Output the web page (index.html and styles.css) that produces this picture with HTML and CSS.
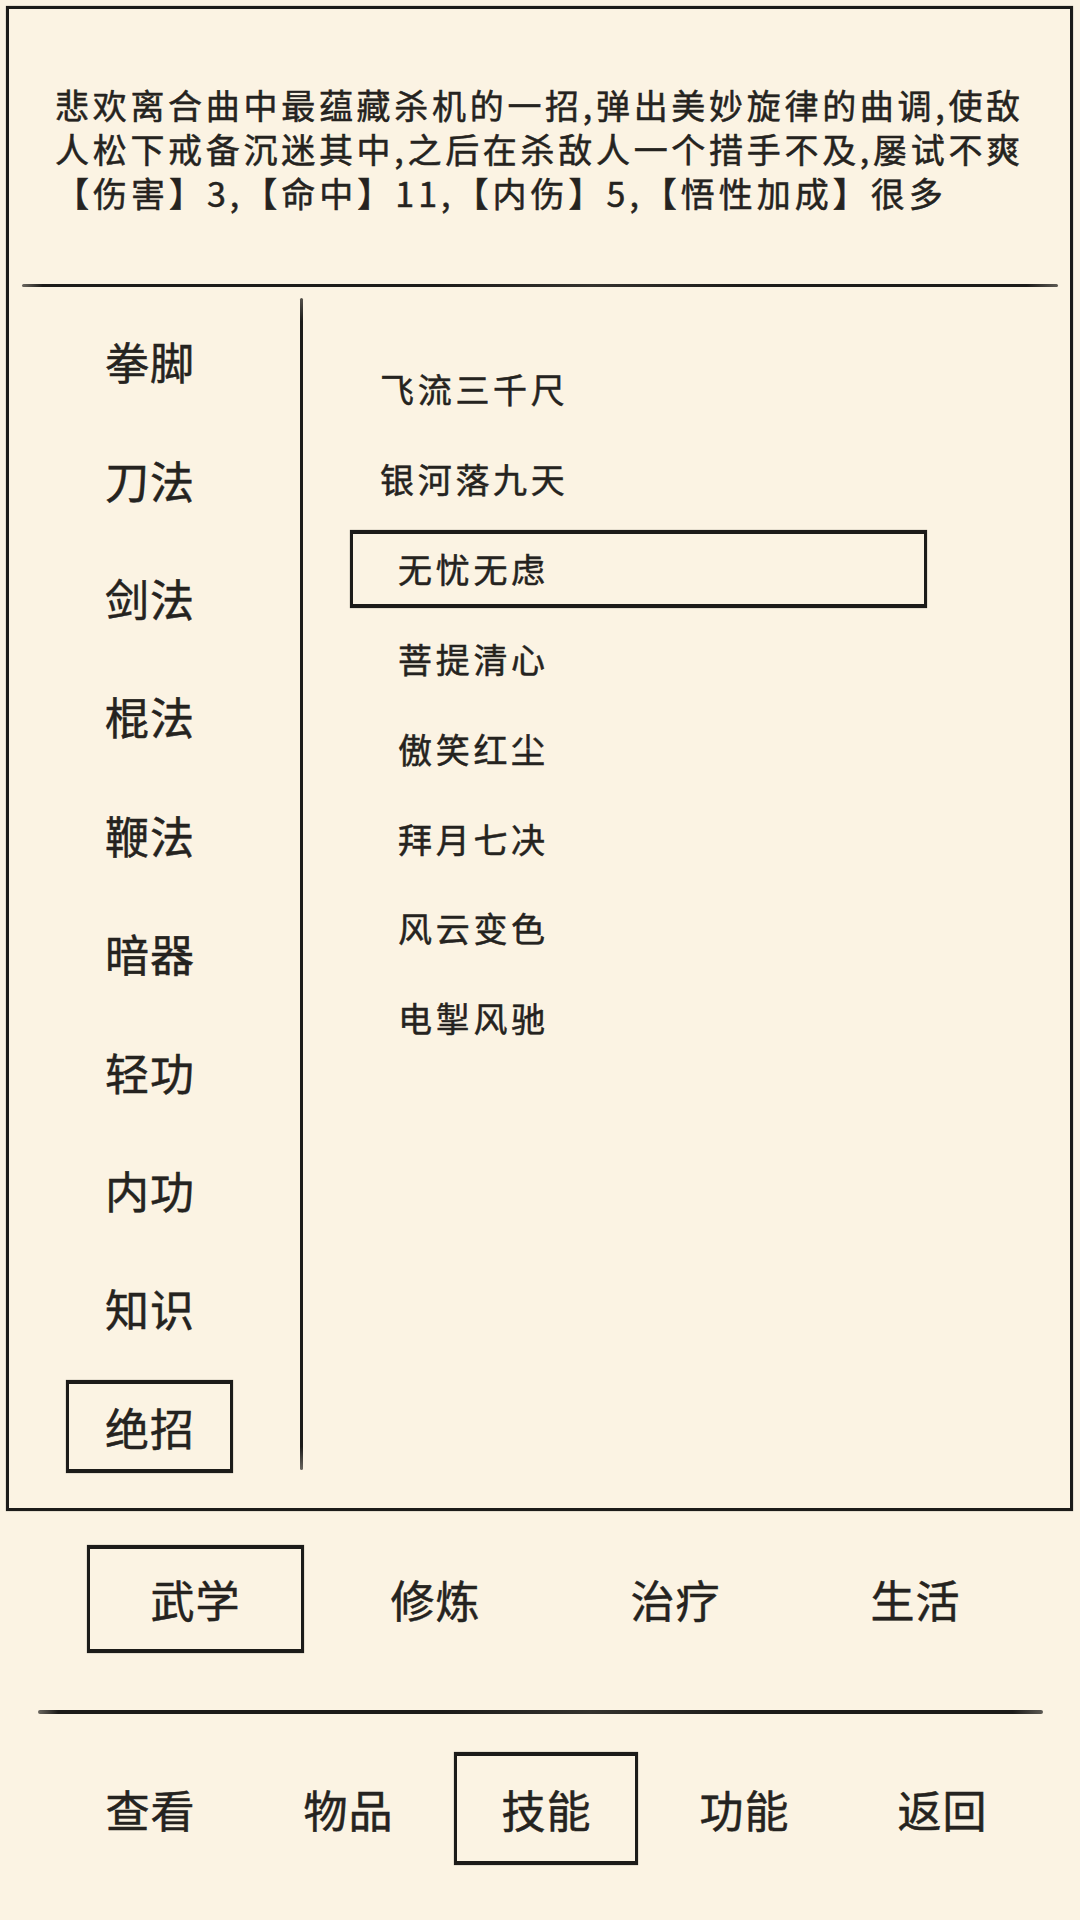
FILE: index.html
```html
<!DOCTYPE html>
<html lang="zh-CN">
<head>
<meta charset="utf-8">
<title>技能</title>
<link rel="stylesheet" href="styles.css">
</head>
<body>
<div class="screen">
  <section class="panel">
    <div class="desc">
      <p class="desc-line">悲欢离合曲中最蕴藏杀机的一招,弹出美妙旋律的曲调,使敌</p>
      <p class="desc-line">人松下戒备沉迷其中,之后在杀敌人一个措手不及,屡试不爽</p>
      <p class="desc-stats">【伤害】3,【命中】11,【内伤】5,【悟性加成】很多</p>
    </div>
    <div class="rule rule-desc"></div>
    <div class="body">
      <ul class="cats">
        <li class="cat"><span class="cat-label">拳脚</span></li>
        <li class="cat"><span class="cat-label">刀法</span></li>
        <li class="cat"><span class="cat-label">剑法</span></li>
        <li class="cat"><span class="cat-label">棍法</span></li>
        <li class="cat"><span class="cat-label">鞭法</span></li>
        <li class="cat"><span class="cat-label">暗器</span></li>
        <li class="cat"><span class="cat-label">轻功</span></li>
        <li class="cat"><span class="cat-label">内功</span></li>
        <li class="cat"><span class="cat-label">知识</span></li>
        <li class="cat"><span class="cat-label ink-box is-selected">绝招</span></li>
      </ul>
      <div class="divider"></div>
      <ul class="skills">
        <li class="skill skill-offset">飞流三千尺</li>
        <li class="skill skill-offset">银河落九天</li>
        <li class="skill ink-box is-selected">无忧无虑</li>
        <li class="skill">菩提清心</li>
        <li class="skill">傲笑红尘</li>
        <li class="skill">拜月七决</li>
        <li class="skill">风云变色</li>
        <li class="skill">电掣风驰</li>
      </ul>
    </div>
  </section>

  <nav class="tabs">
    <span class="tab ink-box is-active">武学</span>
    <span class="tab">修炼</span>
    <span class="tab">治疗</span>
    <span class="tab">生活</span>
  </nav>

  <div class="rule rule-bottom"></div>

  <nav class="menu">
    <span class="menu-item">查看</span>
    <span class="menu-item">物品</span>
    <span class="menu-item ink-box is-active">技能</span>
    <span class="menu-item">功能</span>
    <span class="menu-item">返回</span>
  </nav>
</div>
</body>
</html>
```

FILE: styles.css
```css
* {
  box-sizing: border-box;
  margin: 0;
  padding: 0;
}

html,
body {
  width: 1080px;
  height: 1920px;
}

body {
  background: #fbf3e3;
  color: #252320;
  font-family: "Noto Sans CJK SC", "Noto Sans", sans-serif;
  font-weight: 400;
  -webkit-text-stroke: 0.5px #252320;
  overflow: hidden;
}

.screen {
  display: flex;
  flex-direction: column;
  width: 1080px;
  height: 1920px;
}

/* ink-drawn frames */
.panel,
.ink-box {
  border: 3px solid #1c1b19;
  box-shadow: 0 0 1px rgba(20, 18, 15, 0.55);
}

.ink-box {
  border-top-width: 4px;
  border-bottom-width: 4px;
}

.rule {
  background: linear-gradient(90deg, #6b6760 0, #1c1b19 2%, #1c1b19 40%, #34322e 55%, #1c1b19 70%, #1c1b19 97%, #5d5a54 100%);
  border-radius: 2px;
}

/* ---------- main panel ---------- */
.panel {
  margin: 6px 0 0 6px;
  width: 1067px;
  height: 1505px;
  display: flex;
  flex-direction: column;
}

.desc {
  height: 275px;
  padding: 74px 0 0 46px;
}

.desc-line,
.desc-stats {
  width: 962px;
  font-size: 34px;
  line-height: 44px;
  letter-spacing: 3.7px;
  white-space: nowrap;
}

.desc-line {
  text-align: justify;
  text-align-last: justify;
}

.desc-stats {
  letter-spacing: 4px;
}

.rule-desc {
  height: 3px;
  margin: 0 12px 0 13px;
}

.body {
  flex: 1;
  display: flex;
}

/* categories */
.cats {
  list-style: none;
  width: 291px;
  padding: 15px 10px 0 0;
}

.cat {
  height: 118.4px;
  display: flex;
  align-items: center;
  justify-content: center;
}

.cat-label {
  font-size: 44px;
  letter-spacing: 1px;
  padding-left: 1px;
  line-height: 1;
}

.cat-label.is-selected {
  width: 167px;
  height: 93px;
  display: flex;
  align-items: center;
  justify-content: center;
}

.divider {
  width: 3px;
  margin: 11px 0 38px;
  background: linear-gradient(180deg, #55524c 0, #1c1b19 2%, #1c1b19 98%, #6b6760 100%);
  border-radius: 2px;
}

/* skills */
.skills {
  list-style: none;
  flex: 1;
  padding-top: 57px;
}

.skill {
  height: 89.8px;
  display: flex;
  align-items: center;
  padding-left: 95px;
  font-size: 34px;
  letter-spacing: 3.7px;
}

.skill-offset {
  padding-left: 77px;
}

.skill.is-selected {
  width: 577px;
  height: 78px;
  margin: 6px 0 6px 47px;
  padding-left: 45px;
}

/* ---------- tabs ---------- */
.tabs {
  display: grid;
  grid-template-columns: repeat(4, 240px);
  margin: 34px 0 0 75px;
}

.tab {
  height: 108px;
  display: flex;
  align-items: center;
  justify-content: center;
  font-size: 44px;
  letter-spacing: 1px;
  padding-left: 1px;
}

.tab.is-active {
  width: 217px;
  justify-self: center;
}

.rule-bottom {
  width: 1005px;
  height: 4px;
  margin: 57px 0 0 38px;
}

/* ---------- bottom menu ---------- */
.menu {
  display: grid;
  grid-template-columns: repeat(5, 198px);
  margin: 38px 0 0 51px;
}

.menu-item {
  height: 113px;
  display: flex;
  align-items: center;
  justify-content: center;
  font-size: 44px;
  letter-spacing: 1px;
  padding-left: 1px;
}

.menu-item.is-active {
  width: 184px;
  justify-self: center;
}
```
